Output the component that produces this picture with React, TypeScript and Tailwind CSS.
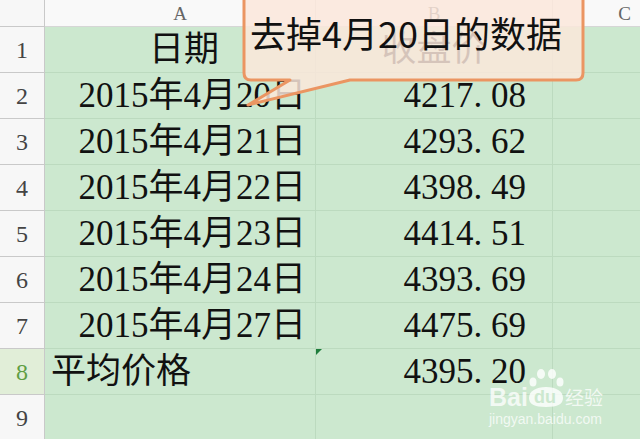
import { FC } from 'react';

const data: [string, string][] = [
  ['日期', '收盘价'],
  ['2015年4月20日', '4217.08'],
  ['2015年4月21日', '4293.62'],
  ['2015年4月22日', '4398.49'],
  ['2015年4月23日', '4414.51'],
  ['2015年4月24日', '4393.69'],
  ['2015年4月27日', '4475.69'],
  ['平均价格', '4395.20'],
  ['', ''],
];

const serif = "font-['Liberation_Serif','Noto_Sans_CJK_SC',serif]";

// SimSun style: the dot takes a half-width cell
const Num: FC<{ value: string }> = ({ value }) => {
  if (!value.includes('.')) return <>{value}</>;
  const [a, b] = value.split('.');
  return (
    <>
      {a}
      <span className="mr-[0.25em]">.</span>
      {b}
    </>
  );
};

const Watermark: FC = () => (
  <div className="absolute left-[489px] top-[368px] flex flex-col gap-[3px] text-white/75 pointer-events-none">
    <div className="flex items-end">
      <span className="text-[25px] leading-[22px] font-bold font-['Liberation_Sans',sans-serif]">Bai</span>
      <div className="relative w-[44px] h-[40px] -ml-[1px]">
        <svg className="absolute inset-0" width="44" height="40" viewBox="0 0 44 40">
          <g fill="rgba(255,255,255,0.8)">
            <ellipse cx="6" cy="14" rx="3.5" ry="4.5" />
            <ellipse cx="14" cy="6" rx="4" ry="5" />
            <ellipse cx="25" cy="6" rx="4" ry="5" />
            <ellipse cx="33" cy="14" rx="3.5" ry="4.5" />
            <path d="M2 30 C2 23 9 19 19 19 C29 19 36 23 36 30 C36 36 31 39 19 39 C7 39 2 36 2 30 Z" />
          </g>
        </svg>
        <span className="absolute left-[7px] bottom-[2px] text-[18px] leading-[18px] font-bold font-['Liberation_Sans',sans-serif] text-[#cce8cf]">
          du
        </span>
      </div>
      <span className="-ml-[6px] text-[19px] leading-[22px] font-['Noto_Sans_CJK_SC',sans-serif]">经验</span>
    </div>
    <span className="text-[14px] leading-[16px] font-['Liberation_Sans',sans-serif]">jingyan.baidu.com</span>
  </div>
);

const Bubble: FC = () => (
  <div className="absolute left-[230px] top-0 w-[370px] h-[115px] pl-[20px] pt-[8px]">
    <svg className="absolute inset-0" width="370" height="115" viewBox="0 0 370 115">
      <path
        d="M14 -20 V73 Q14 80 21 80 H60 L18 105 L120 80 H346 Q353 80 353 73 V-20 Z"
        fill="rgba(251,231,219,0.84)"
        stroke="#eb9562"
        strokeWidth="3"
        strokeLinejoin="round"
      />
    </svg>
    <div className="relative text-[36px] leading-[48px] text-[#111] font-['Noto_Sans_CJK_SC',sans-serif] whitespace-nowrap">
      去掉4月20日的数据
    </div>
  </div>
);

export default function App() {
  const letters = ['A', 'B', 'C'];
  return (
    <div className="relative w-[640px] h-[439px] overflow-hidden bg-white">
      <div className="grid grid-cols-[45px_271px_237px_144px] grid-rows-[27px_repeat(9,46px)]">
        <div className="bg-[#f7f7f7] border-r border-b border-[#c9c9c9]" />
        {letters.map((l) => (
          <div
            key={l}
            className={`bg-[#f9f9f9] border-r border-b border-[#d6d6d6] flex items-center justify-center pt-[2px] text-[19px] text-[#666] ${serif}`}
          >
            {l}
          </div>
        ))}
        {data.map(([a, b], i) => {
          const active = i === 7;
          const aAlign =
            i === 0 ? 'justify-center pl-[8px]' : i === 7 ? 'justify-start pl-[6px]' : 'justify-end pr-[9px]';
          const bAlign = i === 0 ? 'justify-center' : 'justify-end pr-[26px]';
          return (
            <div key={i} className="contents">
              <div
                className={`border-r border-b border-[#c9c9c9] flex items-center justify-center text-[24px] ${serif} ${
                  active ? 'bg-[#e1eed8] text-[#5f9e43]' : 'bg-[#f7f7f7] text-[#444]'
                }`}
              >
                {i + 1}
              </div>
              <div
                className={`bg-[#cce8cf] border-r border-b border-[#bcdabf] flex items-center ${aAlign} text-[35px] leading-none text-[#111] whitespace-nowrap ${serif}`}
              >
                {a}
              </div>
              <div
                className={`relative bg-[#cce8cf] border-r border-b border-[#bcdabf] flex items-center ${bAlign} text-[35px] leading-none text-[#111] whitespace-nowrap ${serif}`}
              >
                {active && (
                  <span className="absolute left-0 top-0 w-[6px] h-[6px] bg-[#1e7d3c] [clip-path:polygon(0_0,100%_0,0_100%)]" />
                )}
                <Num value={b} />
              </div>
              <div className="bg-[#cce8cf] border-r border-b border-[#bcdabf]" />
            </div>
          );
        })}
      </div>
      <Bubble />
      <Watermark />
    </div>
  );
}
